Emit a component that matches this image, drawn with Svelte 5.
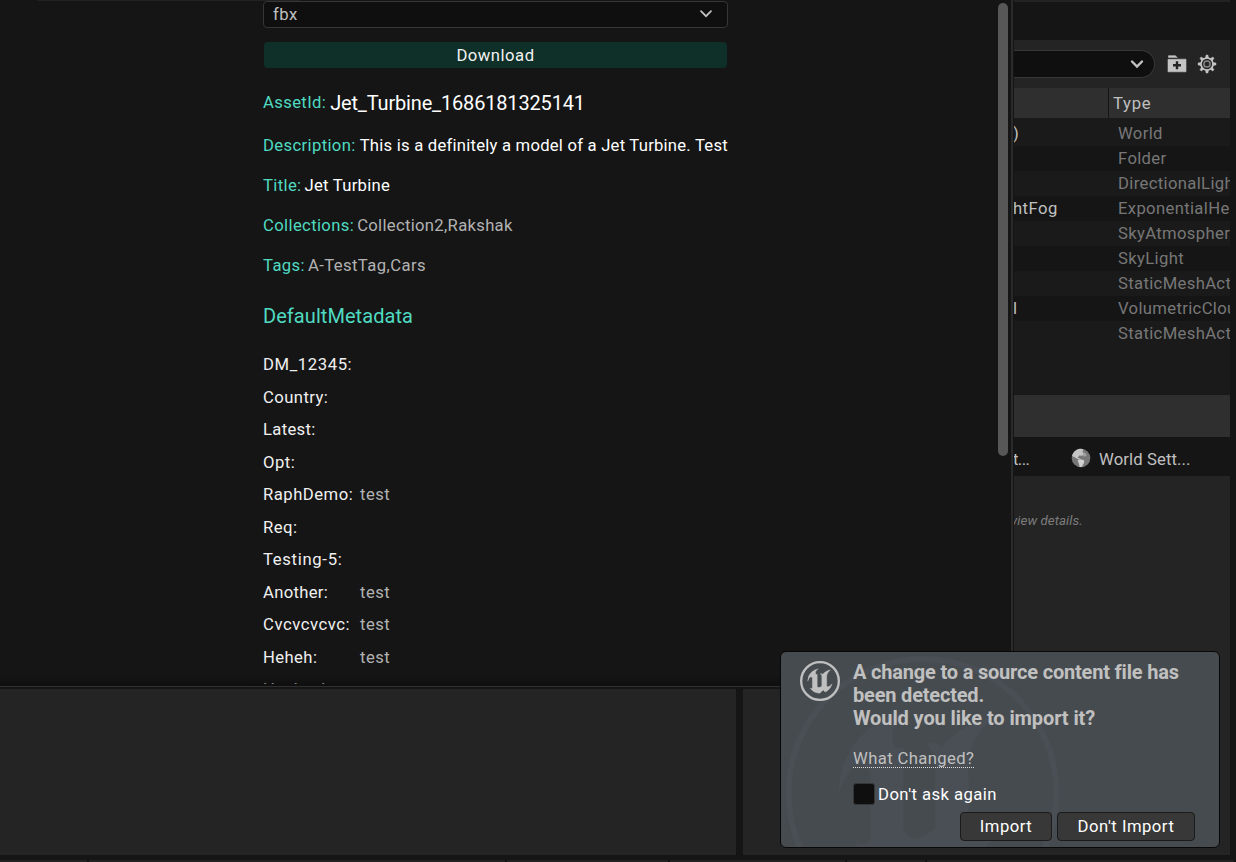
<script>
  const fields = [
    { label: 'AssetId:', value: 'Jet_Turbine_1686181325141', kind: 'big' },
    { label: 'Description:', value: 'This is a definitely a model of a Jet Turbine. Test', kind: 'white long' },
    { label: 'Title:', value: 'Jet Turbine', kind: 'white title' },
    { label: 'Collections:', value: 'Collection2,Rakshak', kind: 'dim' },
    { label: 'Tags:', value: 'A-TestTag,Cars', kind: 'dim tags' }
  ];
  const metadata = [
    ['DM_12345:', '', 0.6], ['Country:', '', 0.42], ['Latest:', '', 0.3], ['Opt:', '', 0.5], ['RaphDemo:', 'test', 0.5],
    ['Req:', '', 0.5], ['Testing-5:', '', 0.68], ['Another:', 'test', 0.3], ['Cvcvcvcvc:', 'test', 0.55],
    ['Heheh:', 'test', 0.4], ['Hcxbxxbxx', '', 0.6]
  ];
  const actors = [
    [')', 'World'], ['', 'Folder'], ['', 'DirectionalLight'], ['htFog', 'ExponentialHeightFog'],
    ['', 'SkyAtmosphere'], ['', 'SkyLight'], ['', 'StaticMeshActor'], ['l', 'VolumetricCloud'],
    ['', 'StaticMeshActor']
  ];
  const glyph = 'M19.13 13.729c-.206.997-1.126 3.557-4.06 4.942l-1.179-1.325-1.988 2a7.338 7.338 0 01-5.804-2.978 2.859 2.859 0 00.65.123c.326.006.678-.114.678-.66v-5.394a.89.89 0 00-1.116-.89c-.92.212-1.656 2.509-1.656 2.509a7.304 7.304 0 012.528-5.597 7.408 7.408 0 013.73-1.721c-1.006.573-1.57 1.507-1.57 2.29 0 1.262.76 1.109.984.923v7.28a1.157 1.157 0 00.148.256 1.075 1.075 0 00.88.445c.76 0 1.747-.868 1.747-.868V9.172c0-.6-.452-1.324-.905-1.572 0 0 .838-.149 1.484.346a5.537 5.537 0 01.387-.425c1.508-1.48 2.929-1.902 4.112-2.112 0 0-2.151 1.69-2.151 3.96 0 1.687.043 5.801.043 5.801.799.771 1.986-.342 3.059-1.441Z';
</script>

<div class="app">
  <div class="main">
    <div class="left">
      <section class="window">
        <div class="topline"></div>
        <div class="content">
          <div class="select">
            <span>fbx</span>
            <svg width="14" height="10" viewBox="0 0 14 10"><path d="M2 2.2 7 7.2 12 2.2" fill="none" stroke="#c4c4c4" stroke-width="1.7" stroke-linecap="round" /></svg>
          </div>
          <div class="download">Download</div>
          <div class="fields">
            {#each fields as f}
              <div class="field {f.kind}"><b>{f.label}</b><span>{f.value}</span></div>
            {/each}
          </div>
          <h2>DefaultMetadata</h2>
          <div class="meta">
            {#each metadata as [k, v, s]}
              <div class="mrow"><span style="letter-spacing: {s}px">{k}</span><i>{v}</i></div>
            {/each}
          </div>
        </div>
        <div class="scroll"></div>
        <div class="fade"></div>
      </section>
      <div class="bottom"><div></div><div></div></div>
    </div>

    <aside>
      <div class="tabs"></div>
      <div class="tools">
        <div class="search"><svg width="16" height="12" viewBox="0 0 16 12"><path d="M3 3.5 8 8.5 13 3.5" fill="none" stroke="#c4c4c4" stroke-width="2.4" stroke-linecap="round" /></svg></div>
        <svg class="folder" width="20" height="18" viewBox="0 0 20 18"><path d="M1.5.7h7l1.8 2H1.5zM1 4.2h18v12.6H1z" fill="#c4c4c4" stroke="#c4c4c4" stroke-width=".6" stroke-linejoin="round" /><path d="M1 3.3h9" stroke="#242424" stroke-width=".8" /><path d="M10 6.2v8M6 10.2h8" stroke="#242424" stroke-width="2.4" /></svg>
        <svg class="gear" width="20" height="20" viewBox="0 0 20 20" fill="none" stroke="#c4c4c4">
          <circle cx="10" cy="10" r="6" stroke-width="1.7" />
          <circle cx="10" cy="10" r="3.1" stroke-width="1.5" stroke="#858585" />
          {#each [0, 45, 90, 135, 180, 225, 270, 315] as a}
            <path d="M8.5 3.9 9.1 1h1.8l.6 2.9z" fill="#c4c4c4" stroke-width=".5" transform="rotate({a} 10 10)" />
          {/each}
        </svg>
      </div>
      <div class="head"><span></span><span>Type</span></div>
      <div class="list">
        {#each actors as [n, t]}
          <div class="actor"><span>{n}</span><em>{t}</em></div>
        {/each}
      </div>
      <div class="count"></div>
      <div class="dtabs">
        <span class="cut">t...</span>
        <svg width="20" height="20" viewBox="0 0 20 20"><circle cx="10" cy="10" r="9.3" fill="#777" /><path d="M1.2 8C2 3.5 6 .8 10 .8l2.5.8-1.2 2.6 2.2 1-2.2 2.6-3-.4-1.6 2.2 3.4 1.6-2 .6-4-2.4z" fill="#c4c4c4" /><path d="M6.5 12.5 10 11.2l3.3 1.3-.4 2.6-2 3.7-2.2.2-.8-3.4z" fill="#d0d0d0" /><path d="M12.5 4.5c2 0 3 1.5 3 3.2l-2.6 1-1-1.6z" fill="#a0a0a0" /></svg>
        <span class="world">World Sett...</span>
      </div>
      <div class="details"><span>view details.</span></div>
    </aside>
  </div>
  <footer><i></i><i></i><i></i><i></i><i></i><i></i></footer>

  <div class="toast">
    <svg class="mark" width="438" height="195" viewBox="0 0 438 195">
      <circle cx="141.5" cy="141" r="134" fill="none" stroke="#4a4f55" stroke-width="6" />
      <path d={glyph} fill="#4a4f56" transform="translate(4.5 4) scale(11.42)" />
    </svg>
    <svg class="logo" width="40" height="40" viewBox="0 0 24 24"><circle cx="12" cy="12" r="11.3" fill="none" stroke="#c0c0c0" stroke-width="1.4" /><path d={glyph} fill="#c0c0c0" stroke="#c0c0c0" stroke-width=".25" /></svg>
    <div class="body">
      <p><span>A change to a source content file has</span><br /><span>been detected.</span><br /><span class="q">Would you like to import it?</span></p>
      <a>What Changed?</a>
      <label><span class="box"></span><span class="ask">Don't ask again</span></label>
      <div class="buttons"><span class="btn imp">Import</span><span class="btn dont">Don't Import</span></div>
    </div>
  </div>
</div>

<style>
  :global(body) { background: #151515; overflow: hidden; }
  * { box-sizing: border-box; }
  .app { position: relative; width: 1236px; height: 862px; display: flex; flex-direction: column; overflow: hidden; background: #151515; color: #c0c0c0; font: 16.67px/20px Roboto, sans-serif; letter-spacing: .3px; white-space: nowrap; }
  .main { display: flex; height: 855px; }
  .left { width: 1014px; display: flex; flex-direction: column; }
  .window { position: relative; height: 687px; width: 1014px; border-right: 1px solid #151515; border-bottom: 1px solid #303030; overflow: hidden; box-shadow: inset -2px 0 #2a2a2a; }
  .topline { margin-left: 37px; width: 263px; height: 1px; background: #222; }
  .content { margin-left: 263px; width: 475px; height: 683px; overflow: hidden; }
  .select { width: 465px; height: 27px; border: 1px solid #363636; border-radius: 4px; background: #0f0f0f; padding: 0 14px 0 9px; display: flex; align-items: center; justify-content: space-between; }
  .select span { letter-spacing: .5px; }
  .select svg { margin-bottom: 1px; }
  .download { width: 463px; margin: 14px 1px 0; height: 26px; border-radius: 4px; background: #0f2f29; color: #f2f2f2; text-align: center; line-height: 27px; letter-spacing: .5px; }
  .fields { padding-top: 14px; }
  .field { height: 40px; display: flex; align-items: center; gap: 4px; }
  .field b { color: #50dac1; font-weight: 400; letter-spacing: .36px; }
  .white span, .big span { color: #fff; }
  .long span { letter-spacing: .225px; }
  .title { gap: 3px; }
  .title span { letter-spacing: .25px; }
  .dim { gap: 3px; }
  .tags span { letter-spacing: .42px; }
  .dim span { color: #b2b2b2; }
  .big { height: 44px; padding-bottom: 2px; }
  .big span { font-size: 20px; letter-spacing: -.17px; }
  h2 { margin: 18px 0 0; font-weight: 400; font-size: 20px; line-height: 25px; color: #50dac1; letter-spacing: .06px; }
  .meta { padding-top: 20px; }
  .mrow { height: 32.5px; display: flex; align-items: center; }
  .mrow span { width: 97px; color: #f0f0f0; }
  .mrow i { font-style: normal; color: #b2b2b2; letter-spacing: .45px; }
  .scroll { position: absolute; left: 998px; top: 3px; width: 10px; height: 453px; border-radius: 5px; background: #575757; }
  .fade { position: absolute; left: 0; right: 2px; bottom: 0; height: 10px; background: linear-gradient(transparent, #0a0a0a99); }
  .bottom { flex: 1; padding-top: 2px; display: grid; grid-template-columns: 736px 1fr; column-gap: 7px; }
  .bottom div { background: #242424; }
  aside { width: 216px; display: flex; flex-direction: column; overflow: hidden; }
  .tabs { height: 40px; border-top: 2px solid #222; }
  .tools { height: 48px; background: #242424; display: flex; align-items: center; }
  .search { width: 141px; height: 28px; border: 1px solid #363636; border-left: 0; border-radius: 0 14px 14px 0; background: #0f0f0f; display: flex; align-items: center; justify-content: flex-end; padding-right: 9px; }
  .folder { margin-left: 12px; }
  .gear { margin-left: 10px; }
  .head { height: 30px; background: #2f2f2f; display: grid; grid-template-columns: 95px 1fr; align-items: stretch; line-height: 32px; }
  .head span:first-child { border-right: 1px solid #151515; }
  .head span:last-child { padding-left: 4px; letter-spacing: .7px; }
  .list { height: 277px; padding-top: 3px; background: #1a1a1a; }
  .actor { height: 25px; display: grid; grid-template-columns: 104px 1fr; line-height: 25px; }
  .actor:nth-child(even) { background: #151515; }
  .actor span { margin-left: -1px; letter-spacing: .45px; }
  .actor em { font-style: normal; color: #777; letter-spacing: .34px; }
  .count { height: 42px; background: #2f2f2f; }
  .dtabs { height: 39px; display: flex; align-items: center; padding-top: 6px; letter-spacing: .12px; }
  .cut { width: 57px; margin-left: -1px; letter-spacing: -.6px; }
  .dtabs svg { margin: 0 8px 3px 1px; }
  .details { flex: 1; background: #242424; padding: 35px 0 0; font-size: 13.33px; font-style: italic; color: #7d7d7d; }
  .details span { margin-left: -3px; letter-spacing: .05px; }
  footer { height: 7px; border-top: 5px solid #151515; background: #222; display: grid; grid-template-columns: 89px 418px 163px 177px 80px 1fr; }
  footer i { border-right: 2px solid #111; }
  .toast { position: absolute; left: 780px; top: 651px; width: 440px; height: 197px; border: 1px solid #080808; border-radius: 6px; background: #464b4f; display: flex; overflow: hidden; }
  .mark { position: absolute; left: 0; top: 0; }
  .logo { position: relative; margin: 9px 13px 0 19px; }
  .body { position: relative; display: flex; flex-direction: column; align-items: flex-start; width: 342px; }
  p { margin: 9px 0 0; font-size: 20px; line-height: 23px; font-weight: 700; letter-spacing: -.19px; }
  .q { letter-spacing: -.1px; }
  a { margin-top: 18px; height: 20px; line-height: 22px; border-bottom: 1px dotted #ddd; letter-spacing: .38px; }
  label { margin-top: 15px; display: flex; align-items: center; gap: 3px; color: #fff; height: 22px; }
  .ask { line-height: 22px; padding-top: 1px; letter-spacing: .45px; }
  .box { width: 22px; height: 22px; border: 1px solid #363636; border-radius: 3px; background: #0f0f0f; }
  .buttons { align-self: flex-end; display: flex; gap: 5px; margin-top: 7px; }
  .btn { height: 29px; border: 1px solid #1b1b1b; border-radius: 4px; background: #383838; color: #fff; text-align: center; line-height: 27px; letter-spacing: .5px; }
  .imp { width: 92px; }
  .dont { width: 138px; }
</style>
